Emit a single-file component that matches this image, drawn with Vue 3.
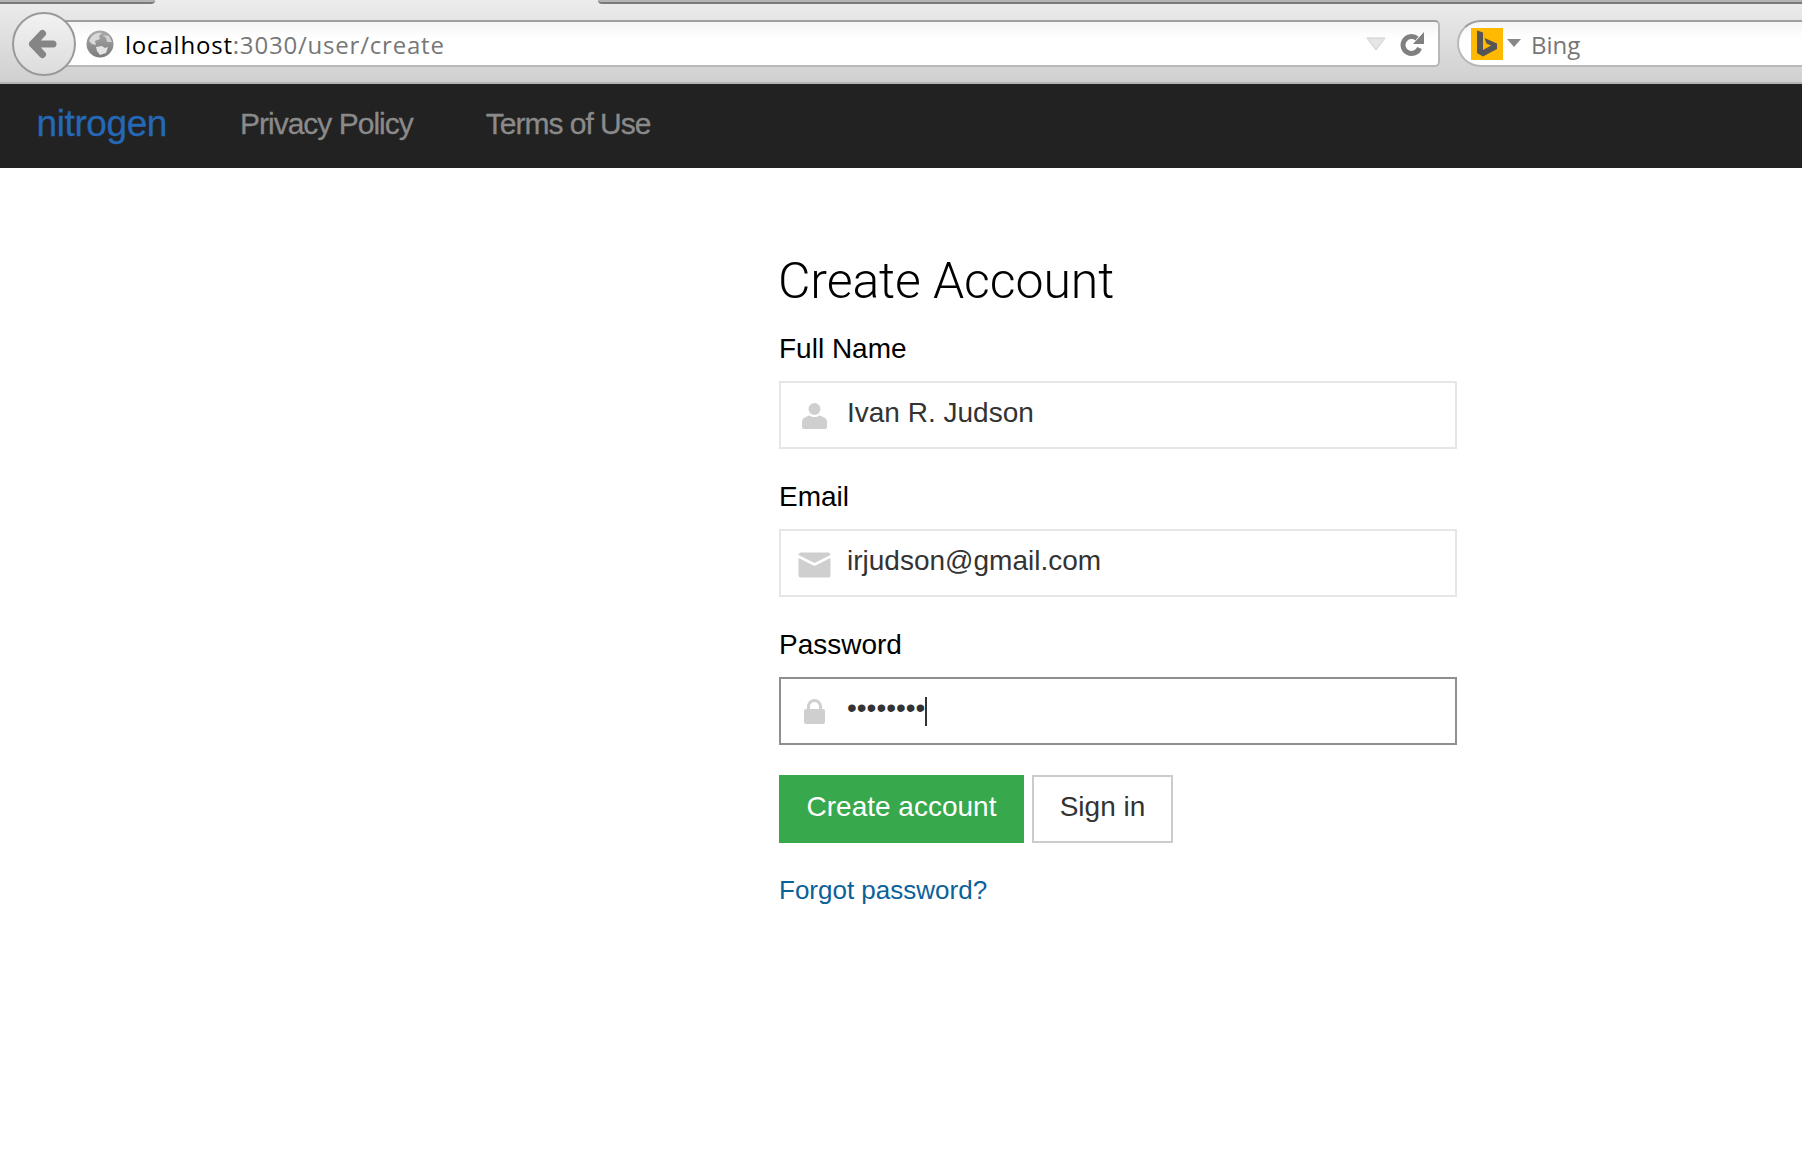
<script setup>
const fields = [
  { label: 'Full Name', value: 'Ivan R. Judson', icon: 'user' },
  { label: 'Email', value: 'irjudson@gmail.com', icon: 'mail' },
  { label: 'Password', value: '••••••••', icon: 'lock', focused: true },
]
const navLinks = ['Privacy Policy', 'Terms of Use']
</script>

<template>
  <div class="page">
    <header class="chrome">
      <div class="tabs">
        <span class="tab tab-left"></span>
        <span class="tab tab-right"></span>
      </div>
      <div class="toolbar">
        <div class="back">
          <svg width="62" height="62" viewBox="0 0 62 62">
            <path d="M29.5 20.5 L19.5 31 L29.5 41.5 M19.5 31 H40" fill="none" stroke="#858585" stroke-width="7" stroke-linejoin="round" stroke-linecap="round" />
          </svg>
        </div>
        <div class="urlbar">
          <svg class="globe" width="28" height="28" viewBox="0 0 28 28">
            <defs>
              <linearGradient id="gl" x1="0" y1="0" x2="0" y2="1">
                <stop offset="0" stop-color="#a8a8a8" />
                <stop offset="1" stop-color="#7c7c7c" />
              </linearGradient>
            </defs>
            <circle cx="14" cy="14" r="13.5" fill="url(#gl)" />
            <path d="M5 7 C8 3 13 2 16 3 L13 6 L14 9 L9 11 L10 15 L6 14 L3 11 Z" fill="#d8d8d8" />
            <path d="M17 5 L23 6 L26 12 L21 12 L20 8 Z" fill="#d0d0d0" />
            <path d="M10 17 L16 16 L19 18 L22 17 L20 23 L14 25 L11 21 Z" fill="#e4e4e4" />
          </svg>
          <span class="url"><b>localhost</b>:3030/user/create</span>
          <svg class="drop" width="20" height="14" viewBox="0 0 20 14">
            <path d="M1 1 H19 L10 13 Z" fill="#e6e6e6" stroke="#cfcfcf" stroke-width="1" />
          </svg>
          <svg class="reload" width="26" height="26" viewBox="0 0 26 26">
            <path d="M19.5 17 A8.5 8.5 0 1 1 17 7.5" fill="none" stroke="#808080" stroke-width="5" />
            <path d="M24 1 V13 H13 Z" fill="#808080" />
          </svg>
        </div>
        <div class="search">
          <span class="bing">
            <svg width="32" height="32" viewBox="0 0 32 32">
              <path d="M6 2.5 L12 4.5 V22 L20 17.5 L15.5 15.5 L13.5 10 L26 15.5 V21 L12 28.5 L6 25 Z" fill="#555" />
            </svg>
          </span>
          <svg class="caret-down" width="14" height="8" viewBox="0 0 14 8"><path d="M0 0 H14 L7 8 Z" fill="#888" /></svg>
          <span class="engine">Bing</span>
        </div>
      </div>
    </header>

    <nav class="navbar">
      <a class="brand">nitrogen</a>
      <a v-for="link in navLinks" :key="link" class="nav-link">{{ link }}</a>
    </nav>

    <main class="content">
      <h1 class="title">Create Account</h1>
      <div v-for="f in fields" :key="f.label" class="group">
        <label class="label">{{ f.label }}</label>
        <div class="field" :class="{ focused: f.focused }">
          <span class="icon">
            <svg v-if="f.icon === 'user'" width="33" height="34" viewBox="0 0 33 34">
              <circle cx="16.5" cy="10" r="6" fill="#cfcfcf" />
              <path d="M4 28 V23 C4 19 9 17 12 16.5 C14 18.5 19 18.5 21 16.5 C24 17 29 19 29 23 V28 Q29 30 27 30 H6 Q4 30 4 28 Z" fill="#cfcfcf" />
            </svg>
            <svg v-else-if="f.icon === 'mail'" class="mail" width="33" height="26" viewBox="0 0 33 26">
              <path d="M3 0.5 H30 Q32.5 0.5 32.5 3 L16.5 11 L0.5 3 Q0.5 0.5 3 0.5 Z" fill="#cfcfcf" />
              <path d="M0.5 6 L16.5 14 L32.5 6 V23.5 Q32.5 25.5 30.5 25.5 H2.5 Q0.5 25.5 0.5 23.5 Z" fill="#cfcfcf" />
            </svg>
            <svg v-else class="lock" width="21" height="25" viewBox="0 0 21 25">
              <path d="M4.5 11 V7.5 A6 6 0 0 1 16.5 7.5 V11" fill="none" stroke="#cfcfcf" stroke-width="3" />
              <rect x="0" y="10" width="21" height="15" rx="2" fill="#cfcfcf" />
            </svg>
          </span>
          <span class="value">{{ f.value }}</span>
          <span v-if="f.focused" class="cursor"></span>
        </div>
      </div>
      <div class="actions">
        <button class="btn primary">Create account</button>
        <button class="btn">Sign in</button>
      </div>
      <a class="forgot">Forgot password?</a>
    </main>
  </div>
</template>

<style scoped>
.page {
  min-height: 1168px;
  background: #fff;
  font-family: "Liberation Sans", Arial, sans-serif;
}
.chrome {
  height: 84px;
  box-sizing: border-box;
  background: linear-gradient(#ececec, #d0d0d0);
  border-bottom: 2px solid #b4b4b4;
}
.tabs {
  display: flex;
  height: 4px;
  overflow: hidden;
}
.tab {
  display: block;
  height: 4px;
  box-sizing: border-box;
  background: #b4b4b4;
  border-bottom: 2px solid #7a7a7a;
}
.tab-left {
  width: 155px;
  border-bottom-right-radius: 10px;
}
.tab-right {
  flex: 1;
  margin-left: 443px;
  border-bottom-left-radius: 10px;
}
.toolbar {
  position: relative;
  display: flex;
  gap: 17px;
  padding: 16px 0 0 60px;
}
.back {
  position: absolute;
  left: 12px;
  top: 8px;
  width: 64px;
  height: 64px;
  box-sizing: border-box;
  display: flex;
  align-items: center;
  justify-content: center;
  border-radius: 50%;
  border: 2px solid #9a9a9a;
  background: linear-gradient(#f2f2f2, #dcdcdc);
  z-index: 1;
}
.back svg { flex: none; }
.urlbar,
.search {
  height: 47px;
  box-sizing: border-box;
  display: flex;
  align-items: center;
  border: 2px solid #b8b8b8;
  border-top-color: #a0a0a0;
  background: linear-gradient(#f5f5f5, #fff 40%);
  font-family: "Open Sans", "Noto Sans", sans-serif;
  font-size: 24px;
  color: #777;
}
.urlbar {
  width: 1380px;
  flex: none;
  border-left: 0;
  border-radius: 0 5px 5px 0;
  padding-left: 26px;
}
.globe { flex: none; }
.url {
  margin-left: 11px;
  padding-top: 2px;
  letter-spacing: 0.8px;
  flex: 1;
}
.url b {
  font-weight: 400;
  color: #000;
}
.drop { flex: none; margin-right: 14px; }
.reload { flex: none; margin-right: 12px; }
.search {
  flex: 1;
  border-right: 0;
  border-radius: 24px 0 0 24px;
  padding-left: 12px;
}
.bing {
  display: block;
  width: 32px;
  height: 32px;
  background: #ffb900;
}
.caret-down { margin: 0 10px 2px 4px; }
.engine { padding-top: 2px; }

.navbar {
  height: 84px;
  display: flex;
  align-items: center;
  background: #222;
  padding: 0 0 4px 36.5px;
  box-sizing: border-box;
  gap: 73px;
}
.brand {
  font-size: 37px;
  letter-spacing: -0.4px;
  color: #2468b6;
  -webkit-text-stroke: 0.3px #2468b6;
}
.nav-link {
  font-size: 30px;
  letter-spacing: -1px;
  color: #8a8a8a;
  -webkit-text-stroke: 0.3px #8a8a8a;
}

.content {
  margin-left: 779px;
  width: 678px;
  padding-top: 83px;
}
.title {
  margin: 0 0 18px -1px;
  font-family: Roboto, "Liberation Sans", sans-serif;
  font-weight: 300;
  font-size: 50px;
  letter-spacing: -0.1px;
  line-height: 60px;
  color: #000;
}
.group { margin-bottom: 28px; }
.label {
  display: block;
  font-size: 28px;
  line-height: 40px;
  margin-bottom: 12px;
  color: #000;
}
.field {
  height: 68px;
  box-sizing: border-box;
  display: flex;
  align-items: center;
  border: 2px solid #e6e6e6;
  background: #fff;
}
.field.focused { border-color: #8f8f8f; }
.icon {
  flex: none;
  width: 66px;
  height: 100%;
  display: flex;
  align-items: center;
  justify-content: center;
}
.icon svg { margin-top: 2px; }
.icon .mail { margin-top: 4px; }
.icon .lock { margin-top: 1px; }
.value {
  font-size: 28px;
  color: #333;
  padding-bottom: 4px;
}
.focused .value { padding-bottom: 7px; }
.cursor {
  width: 2px;
  height: 29px;
  background: #333;
}
.actions {
  display: flex;
  gap: 8px;
  margin-top: 30px;
}
.btn {
  height: 68px;
  box-sizing: border-box;
  width: 141px;
  padding: 0 0 4px;
  font: inherit;
  font-size: 28px;
  color: #333;
  background: #fff;
  border: 2px solid #ccc;
  border-radius: 0;
}
.btn.primary {
  width: 245px;
  color: #fff;
  background: #38a84c;
  border: 0;
}
.forgot {
  display: block;
  margin-top: 30px;
  font-size: 26px;
  line-height: 34px;
  color: #0b6199;
}
</style>
